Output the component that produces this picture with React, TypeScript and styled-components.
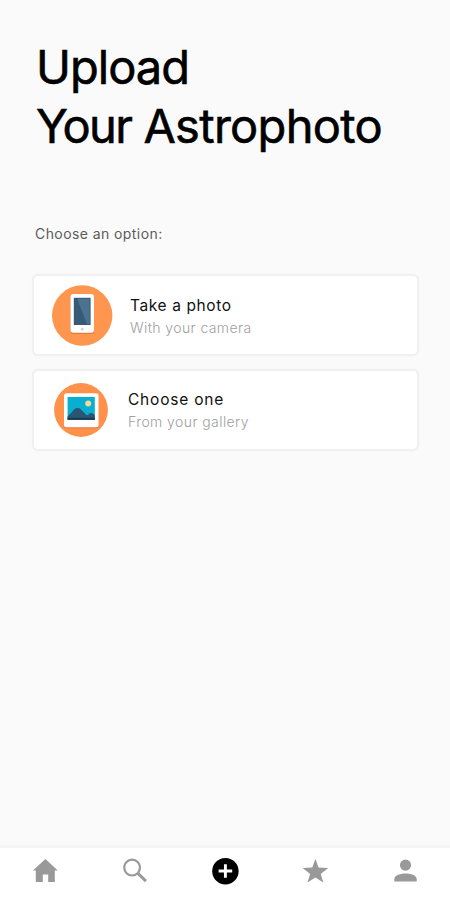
import React from "react";
import styled, { createGlobalStyle } from "styled-components";

const GlobalStyle = createGlobalStyle`
  * { box-sizing: border-box; }
  body { margin: 0; background: #fafafa; font-family: Inter, "Liberation Sans", sans-serif; }
`;

const Screen = styled.div`
  display: flex;
  flex-direction: column;
  width: 450px;
  height: 900px;
  background: #fafafa;
  overflow: hidden;
`;

const Content = styled.main`
  flex: 1;
  padding: 37px 31px 0 32px;
`;

const Title = styled.h1`
  margin: 0 0 0 4px;
  font-size: 47px;
  line-height: 59px;
  font-weight: 400;
  letter-spacing: -1px;
  color: #000;
  -webkit-text-stroke: 0.6px #000;
  white-space: nowrap;
`;

const TitleWord = styled.span<{ $tracking: number }>`
  letter-spacing: ${(p) => p.$tracking}px;
`;

const Prompt = styled.p`
  margin: 69px 0 0 3px;
  font-size: 14px;
  line-height: 20px;
  letter-spacing: 0.42px;
  color: #5c5c5c;
`;

const Options = styled.div`
  display: flex;
  flex-direction: column;
  gap: 13px;
  margin-top: 30px;
`;

const Option = styled.button<{ $gap: number; $inset: number }>`
  display: flex;
  align-items: center;
  gap: ${(p) => p.$gap}px;
  width: 387px;
  height: 82px;
  padding: 0 0 0 ${(p) => p.$inset}px;
  border: 2px solid #f0f0f0;
  border-radius: 6px;
  background: #fff;
  box-shadow: 0 0 2px #f1f1f1;
  font-family: inherit;
  text-align: left;
`;

const OptionText = styled.span<{ $drop: number }>`
  display: flex;
  flex-direction: column;
  padding-top: ${(p) => p.$drop}px;
`;

const OptionTitle = styled.span<{ $tracking: number }>`
  font-size: 15.5px;
  line-height: 23px;
  letter-spacing: ${(p) => p.$tracking}px;
  color: #111;
`;

const OptionHint = styled.span`
  font-size: 14px;
  line-height: 22px;
  letter-spacing: 0.42px;
  font-weight: 300;
  color: #a0a0a0;
`;

const TabBar = styled.nav`
  display: grid;
  grid-template-columns: repeat(5, 1fr);
  height: 55px;
  padding-top: 10px;
  border-top: 3px solid #f5f5f5;
  background: #fff;
`;

const Tab = styled.button<{ $active?: boolean }>`
  display: flex;
  justify-content: center;
  align-items: flex-start;
  padding: 0;
  border: 0;
  background: none;
  color: ${(p) => (p.$active ? "#000" : "#999")};
`;

const PhoneArt = () => (
  <svg width="61" height="61" viewBox="0 0 61 61">
    <circle cx="30.2" cy="30.5" r="30.2" fill="#ff9650" />
    <rect x="18.5" y="10" width="23.5" height="39" rx="3" fill="#e8793b" />
    <rect x="18.5" y="9" width="23.5" height="38.8" rx="3" fill="#fff" />
    <rect x="21.8" y="12.8" width="16.8" height="27.2" fill="#365a77" />
    <path d="M25 13.8h12.6V39H35z" fill="#4b728e" />
    <circle cx="30.2" cy="44.2" r="1.4" fill="#d3d3d3" />
  </svg>
);

const PictureArt = () => (
  <svg width="54" height="54" viewBox="0 0 54 54">
    <circle cx="27" cy="27" r="26.9" fill="#ff914b" />
    <rect x="10" y="11.2" width="34.6" height="34" rx="2.5" fill="#e47a3b" />
    <rect x="10" y="10.2" width="34.6" height="34" rx="2.5" fill="#fff" />
    <rect x="13.6" y="14" width="27.2" height="22.8" fill="#08afd0" />
    <circle cx="34.2" cy="20.4" r="3" fill="#f5d995" />
    <path
      d="M13.6 36.8v-3.6l4-3.8c1.8-1.9 2.7-4.4 5.8-4.4 2.9 0 4 2.1 5.8 3.8l3.2 3.2c1.3 1 2.6-2.1 4.9-2.1 1.7 0 2.4 1.4 3.5 2.4v4.5z"
      fill="#2c5571"
    />
    <path d="M13.6 34.8h27.2v2H13.6z" fill="#173c56" />
  </svg>
);

const HomeIcon = () => (
  <svg width="26" height="26" viewBox="0 0 26 26" fill="currentColor">
    <path d="M13.4 1.1 25.8 12.4H22.8V24H16.2V16.5H10.8V24H3.8V12.4H1z" />
  </svg>
);

const SearchIcon = () => (
  <svg width="26" height="26" viewBox="0 0 26 26" fill="none" stroke="currentColor">
    <circle cx="10.1" cy="9.6" r="7.9" strokeWidth="2.2" />
    <path d="m15.9 15.4 8 7.7" strokeWidth="2.9" />
  </svg>
);

const AddIcon = () => (
  <svg width="28" height="28" viewBox="0 0 28 28">
    <circle cx="14.4" cy="13.2" r="13.2" fill="currentColor" />
    <path d="M14.4 6.2v13.6M7.6 13h13.6" stroke="#fff" strokeWidth="2.9" />
  </svg>
);

const StarIcon = () => (
  <svg width="28" height="26" viewBox="0 0 28 26" fill="currentColor">
    <path d="m14.4.8 3.1 8.6 9.7.5-7.5 6 2.6 8.7-7.9-5-7.9 5 2.6-8.7-7.5-6 9.7-.5z" />
  </svg>
);

const PersonIcon = () => (
  <svg width="26" height="26" viewBox="0 0 26 26" fill="currentColor">
    <circle cx="13.5" cy="7.1" r="5.6" />
    <path d="M2.3 23.6V21c0-4.1 6.7-5.6 11.2-5.6S24.7 16.9 24.7 21v2.6z" />
  </svg>
);

export default function App() {
  return (
    <Screen>
      <GlobalStyle />
      <Content>
        <Title>
          Upload
          <br />
          <TitleWord $tracking={-1.7}>Your</TitleWord>{" "}
          <TitleWord $tracking={-0.7}>Astrophoto</TitleWord>
        </Title>
        <Prompt>Choose an option:</Prompt>
        <Options>
          <Option $inset={18} $gap={17}>
            <PhoneArt />
            <OptionText $drop={2}>
              <OptionTitle $tracking={0.6}>Take a photo</OptionTitle>
              <OptionHint>With your camera</OptionHint>
            </OptionText>
          </Option>
          <Option $inset={20} $gap={20}>
            <PictureArt />
            <OptionText $drop={0}>
              <OptionTitle $tracking={0.8}>Choose one</OptionTitle>
              <OptionHint>From your gallery</OptionHint>
            </OptionText>
          </Option>
        </Options>
      </Content>
      <TabBar>
        <Tab aria-label="Home"><HomeIcon /></Tab>
        <Tab aria-label="Search"><SearchIcon /></Tab>
        <Tab aria-label="Upload" $active><AddIcon /></Tab>
        <Tab aria-label="Favorites"><StarIcon /></Tab>
        <Tab aria-label="Profile"><PersonIcon /></Tab>
      </TabBar>
    </Screen>
  );
}
